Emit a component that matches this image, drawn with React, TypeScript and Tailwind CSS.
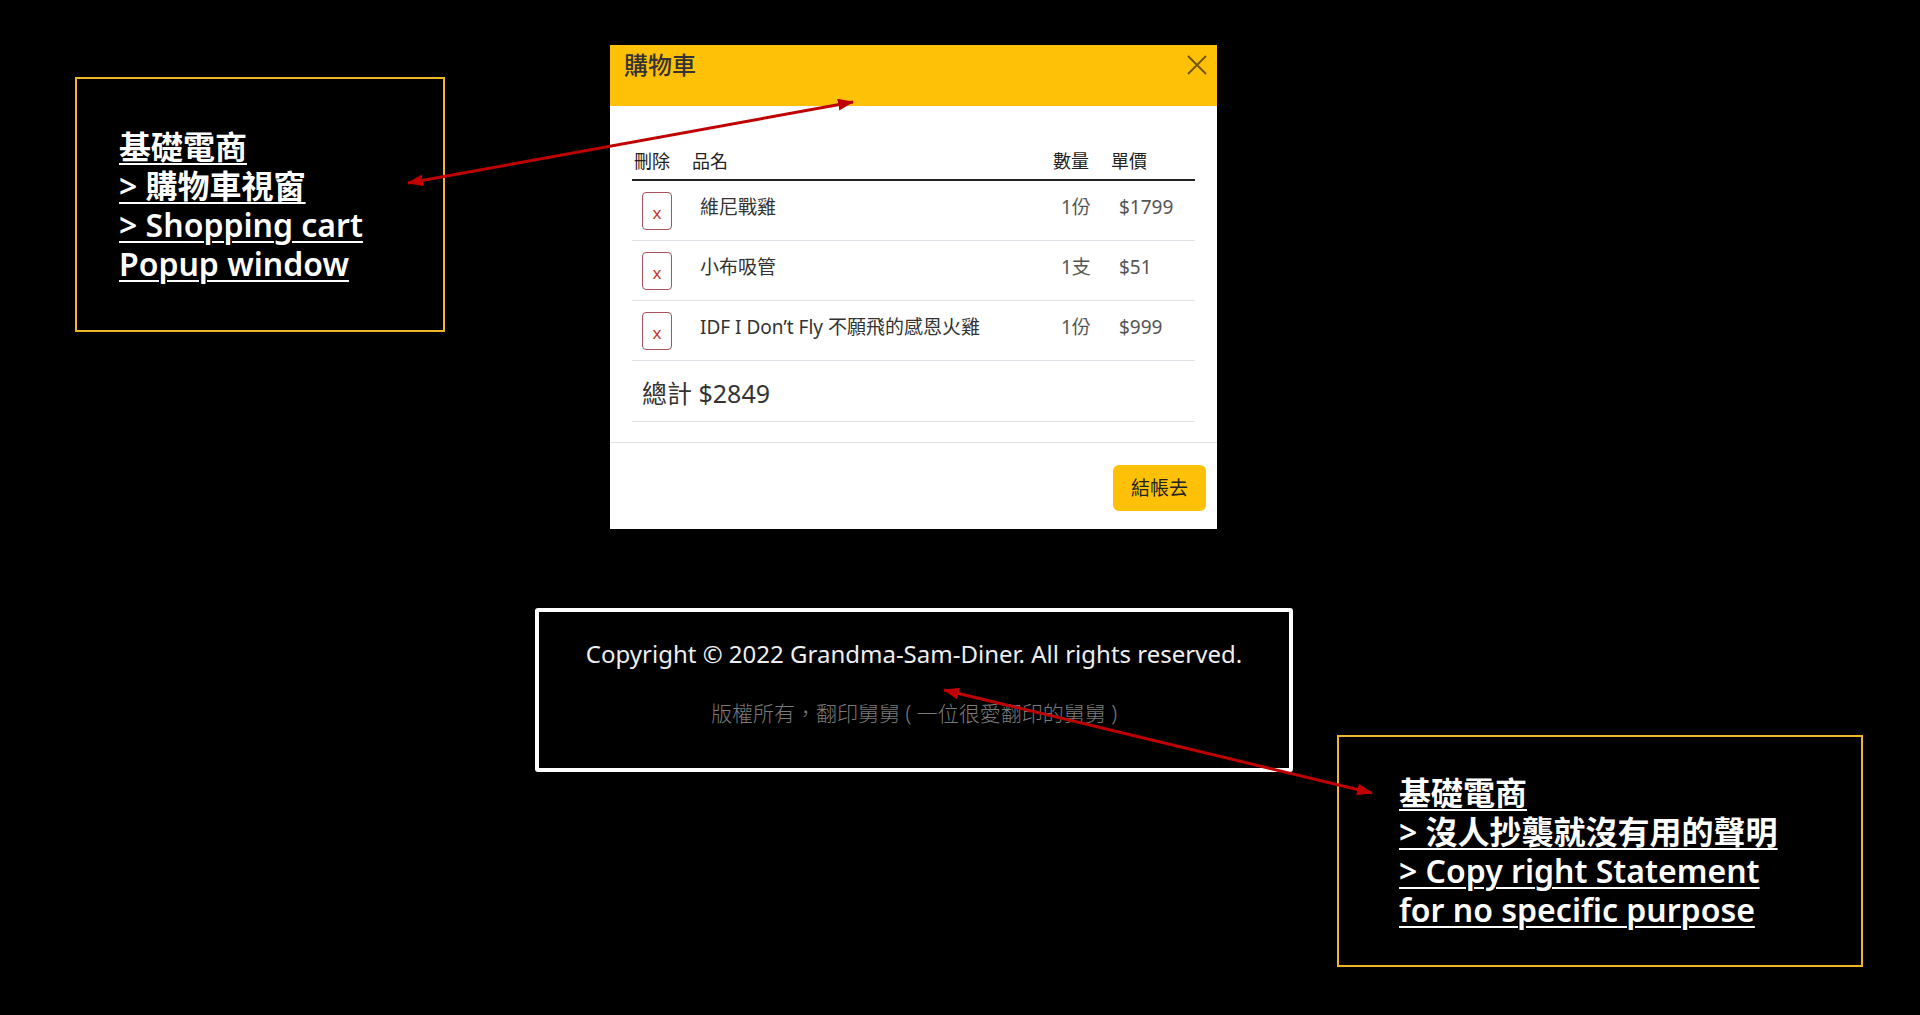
import React from "react";

const font = "font-['Noto_Sans','Noto_Sans_CJK_TC',sans-serif]";

type Item = { name: string; qty: string; price: string };

const items: Item[] = [
  { name: "維尼戰雞", qty: "1份", price: "$1799" },
  { name: "小布吸管", qty: "1支", price: "$51" },
  { name: "IDF I Don’t Fly 不願飛的感恩火雞", qty: "1份", price: "$999" },
];

function Note({ lines, className }: { lines: string[]; className: string }) {
  return (
    <div className={`flex flex-col justify-center border-2 border-[#f0b429] ${className}`}>
      <p className="text-[32px] leading-[39px] font-semibold text-white underline decoration-2 underline-offset-[4px]">
        {lines.map((l, i) => (
          <span key={i}>
            {l}
            <br />
          </span>
        ))}
      </p>
    </div>
  );
}

function CartModal() {
  return (
    <div className="ml-[165px] flex w-[607px] flex-col bg-white">
      {/* header */}
      <div className="flex h-[61px] items-start justify-between bg-[#ffc107] pl-[14px] pr-[10px] pt-[4px]">
        <h5 className="text-[24px] font-medium leading-[32px] text-[#333]">購物車</h5>
        <svg className="mt-[6px]" width="20" height="20" viewBox="0 0 20 20">
          <path d="M1 1L19 19M19 1L1 19" stroke="#000" strokeOpacity="0.55" strokeWidth="2" />
        </svg>
      </div>

      {/* body */}
      <div className="px-[22px] pb-[20px] pt-[38px]">
        <div className="grid h-[37px] grid-cols-[60px_359px_58px_88px] items-center border-b-2 border-[#222] text-[18px] text-[#222]">
          <span className="pl-[2px]">刪除</span>
          <span>品名</span>
          <span className="pl-[2px]">數量</span>
          <span className="pl-[2px]">單價</span>
        </div>
        {items.map((it) => (
          <div
            key={it.name}
            className="grid h-[60px] grid-cols-[60px_359px_58px_88px] items-center border-b border-[#dee2e6] text-[19px]"
          >
            <div className="pl-[10px]">
              <button className="flex h-[38px] w-[30px] items-center justify-center rounded-[4px] border border-[#a8505c] pt-[4px] text-[17px] text-[#c0392b]">
                x
              </button>
            </div>
            <span className="-mt-[6px] pl-[8px] text-[#333]">{it.name}</span>
            <span className="-mt-[6px] pl-[10px] text-[#555]">{it.qty}</span>
            <span className="-mt-[6px] pl-[10px] text-[#555]">{it.price}</span>
          </div>
        ))}
        <div className="flex h-[61px] items-center border-b border-[#dee2e6] pl-[10px] pt-[6px] text-[25px] text-[#333]">
          總計 $2849
        </div>
      </div>

      {/* footer */}
      <div className="flex justify-end border-t border-[#dee2e6] pb-[18px] pr-[11px] pt-[22px]">
        <button className="h-[46px] w-[93px] rounded-[6px] bg-[#ffc107] text-[19px] text-[#222]">結帳去</button>
      </div>
    </div>
  );
}

function Copyright() {
  return (
    <div className="ml-[535px] flex h-[164px] w-[758px] flex-col items-center rounded-[3px] border-4 border-white pt-[27px]">
      <p className="text-[24px] leading-[30px] text-[#eee]">Copyright © 2022 Grandma-Sam-Diner. All rights reserved.</p>
      <p className="mt-[29px] text-[21px] font-light leading-[30px] text-[#7a7a7a]">
        版權所有，翻印舅舅 ( 一位很愛翻印的舅舅 )
      </p>
    </div>
  );
}

export default function App() {
  return (
    <div className={`relative h-[1015px] w-[1920px] overflow-hidden bg-black ${font}`}>
      <div className="flex items-start pt-[45px]">
        <Note
          className="ml-[75px] mt-[32px] h-[255px] w-[370px] pl-[42px]"
          lines={["基礎電商", "> 購物車視窗", "> Shopping cart", "Popup window"]}
        />
        <CartModal />
      </div>

      <div className="mt-[79px] flex items-start">
        <Copyright />
        <Note
          className="ml-[44px] mt-[127px] h-[232px] w-[526px] pl-[60px]"
          lines={["基礎電商", "> 沒人抄襲就沒有用的聲明", "> Copy right Statement", "for no specific purpose"]}
        />
      </div>

      {/* callout arrows */}
      <svg className="pointer-events-none absolute inset-0" width="1920" height="1015">
        <defs>
          <marker
            id="head"
            viewBox="0 0 16 12"
            refX="15"
            refY="6"
            markerWidth="16"
            markerHeight="12"
            markerUnits="userSpaceOnUse"
            orient="auto-start-reverse"
          >
            <path d="M0 0L16 6L0 12z" fill="#c00000" />
          </marker>
        </defs>
        <line x1="408" y1="183" x2="853" y2="102" stroke="#c00000" strokeWidth="3" markerStart="url(#head)" markerEnd="url(#head)" />
        <line x1="944" y1="690" x2="1372" y2="793" stroke="#c00000" strokeWidth="3" markerStart="url(#head)" markerEnd="url(#head)" />
      </svg>
    </div>
  );
}
